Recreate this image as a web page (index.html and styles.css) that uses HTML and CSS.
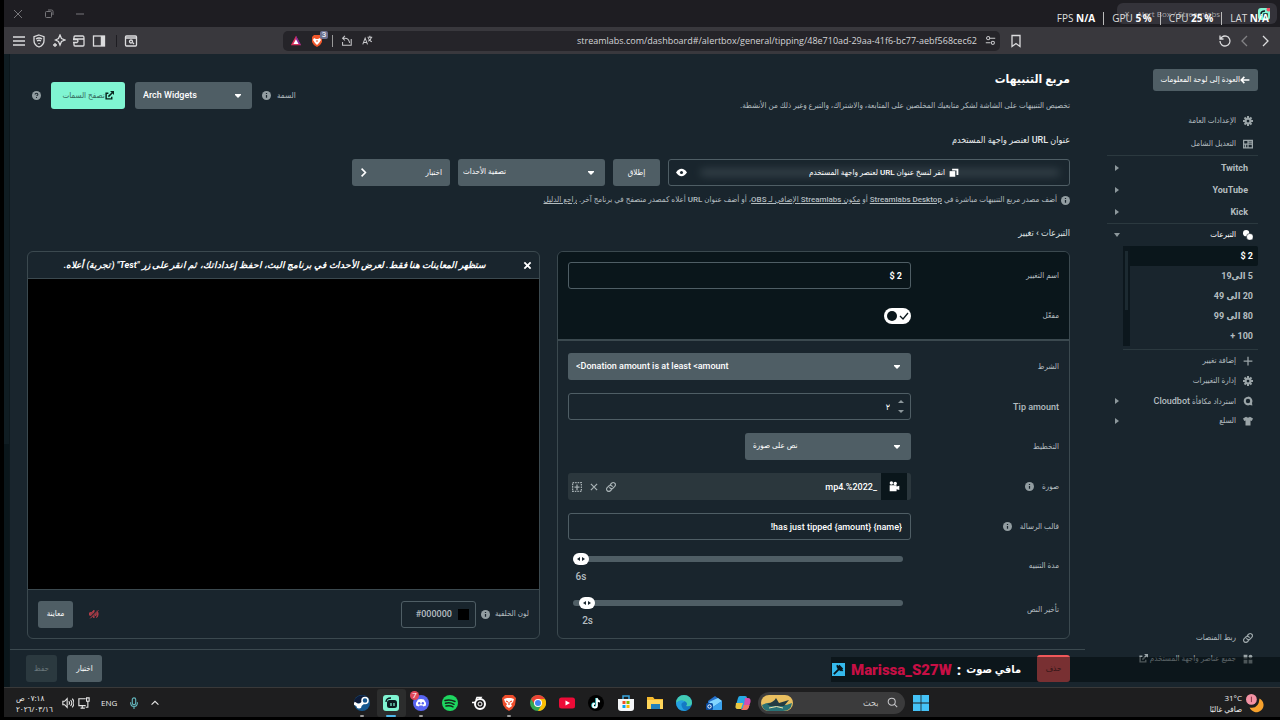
FILE: index.html
```html
<!DOCTYPE html>
<html lang="ar" dir="rtl">
<head>
<meta charset="utf-8">
<title>Alert Box / Streamlabs</title>
<link rel="stylesheet" href="styles.css">
</head>
<body>
<svg class="sprite" aria-hidden="true">
  <symbol id="i-info" viewBox="0 0 16 16"><circle cx="8" cy="8" r="8" fill="currentColor"/><path d="M8 7v5M8 3.5v2" stroke="#19252d" stroke-width="2.2"/></symbol>
  <symbol id="i-gear" viewBox="0 0 16 16"><path fill="none" stroke="currentColor" stroke-width="3.2" d="M8 0v16M0 8h16M2.4 2.4l11.2 11.2M13.600 2.4L2.400 13.600" /><circle cx="8" cy="8" r="5.600" fill="currentColor"/><circle cx="8" cy="8" r="2.200" fill="#19252d"/></symbol>
  <symbol id="i-link" viewBox="0 0 16 16"><g fill="none" stroke="currentColor" stroke-width="1.900" stroke-linecap="round"><path d="M7 4l2-2a3.500 3.500 0 0 1 5 5l-3 3a3.500 3.500 0 0 1-5-1"/><path d="M9 12l-2 2a3.500 3.500 0 0 1-5-5l3-3a3.500 3.500 0 0 1 5 1"/></g></symbol>
  <symbol id="i-ext" viewBox="0 0 16 16"><path fill="none" stroke="currentColor" stroke-width="2.600" d="M6 4H2v10h10v-4M6 10l7-7"/><path fill="currentColor" d="M9 0h7v7z"/></symbol>
</svg>

<header class="tabs" dir="ltr">
  <div class="window-controls">
    <button aria-label="إغلاق"><svg viewBox="0 0 10 10"><path d="M1 1l8 8M9 1L1 9"/></svg></button>
    <button aria-label="استعادة"><svg viewBox="0 0 10 10"><rect x="1.500" y="2.500" width="6" height="6" rx="1"/><path d="M4 1h3.500q1.500 0 1.500 1.500V6"/></svg></button>
    <button aria-label="تصغير"><svg viewBox="0 0 10 10"><path d="M1 5h8"/></svg></button>
  </div>
  <div class="tab"><span>✕</span><span class="tab-title">Alert Box / Streamlabs</span><svg viewBox="0 0 12 12"><rect width="12" height="12" rx="3" fill="#80f5d2"/><path d="M3 8V6q0-3 4-3M6 6h3v3H6z" fill="none" stroke="#0b1b20" stroke-width="1.500"/><circle cx="10.500" cy="1.500" r="2" fill="#f05064"/></svg></div>
</header>
<div class="perf" dir="ltr"><span>FPS <b>N/A</b></span><i></i><span>GPU <b>5&thinsp;%</b></span><i></i><span>CPU <b>25&thinsp;%</b></span><i></i><span>LAT <b>N/A</b></span></div>

<nav class="toolbar" dir="ltr">
  <div class="tools">
    <button aria-label="القائمة"><svg viewBox="0 0 14 14"><path d="M1 3h12M1 7h12M1 11h12"/></svg></button>
    <button aria-label="VPN"><svg viewBox="0 0 14 14"><path d="M7 1l5 1.700v4Q12 11 7 13 2 11 2 6.700v-4z"/><path d="M4 5q3-2 6 0M5 7q2-1.500 4 0M7 9v1"/></svg></button>
    <button aria-label="Leo"><svg viewBox="0 0 14 14"><path d="M8 1l1.500 3.500L13 6 9.500 7.500 8 11 6.500 7.500 3.500 6l3-1.500zM3 9v4M1 11h4"/></svg></button>
    <button aria-label="المحفظة"><svg viewBox="0 0 14 14"><path d="M2 5V3q0-1 1-1h8q1 0 1 2v7q0 1-1 1H3q-1 0-1-1V9M1 5h11M1 8.500h4q2-1.500 0-3H1"/></svg></button>
    <button aria-label="الشريط الجانبي"><svg viewBox="0 0 14 14"><rect x="1.500" y="2" width="11" height="10"/><path d="M10.500 2v10" stroke-width="3.500"/></svg></button>
    <span class="bar-sep"></span>
    <button aria-label="بحث في علامات التبويب"><svg viewBox="0 0 14 14"><rect x="1.500" y="2" width="11" height="10" rx="1"/><path d="M1.500 4h11M8.500 8.500L10 10"/><circle cx="7" cy="7.500" r="1.500"/></svg></button>
  </div>
  <div class="address">
    <svg viewBox="0 0 14 14"><path d="M7 1l6 11H1z" fill="#d8305b"/><path d="M7 1l6 11-6-3.500z" fill="#842b9c"/><path d="M7 5l3 5.500H4z" fill="#fff"/></svg>
    <span class="shield"><svg viewBox="0 0 14 14"><path d="M4 1h6l2 2v5q-1 3-5 5-4-2-5-5V3z" fill="#f0572b"/><path d="M4 4l2 1h2l2-1 1 2-2 3-2 2-2-2-2-3z" fill="#fff"/><path d="M6 7h2" stroke="#f0572b"/></svg><small>3</small></span>
    <span class="addr-sep"></span>
    <svg class="line" viewBox="0 0 14 14"><path d="M5 1L2 4l3 3M2 4h3q5 0 6 6M2 9v4h11V5"/></svg>
    <svg class="line translate" viewBox="0 0 14 14"><path d="M1 12l3-8 3 8M2 9.500h4M7 3h6M10 1v2M12 3q-1 4-4.500 5M8 4q1 3 4.500 4.500"/></svg>
    <input class="url" aria-label="شريط العنوان" value="streamlabs.com/dashboard#/alertbox/general/tipping/48e710ad-29aa-41f6-bc77-aebf568cec62">
    <svg class="line" viewBox="0 0 14 14"><path d="M6 4h7M1 10h6"/><circle cx="4" cy="4" r="2"/><circle cx="10" cy="10" r="2"/></svg>
  </div>
  <button aria-label="إشارة مرجعية"><svg viewBox="0 0 14 14"><path d="M3 1.500h8v11L7 9.500l-4 3z"/></svg></button>
  <div class="history">
    <button aria-label="تحديث"><svg viewBox="0 0 14 14"><path d="M2 7a5 5 0 1 0 2-4L2 5M2 1.500V5h3.500"/></svg></button>
    <button class="dim" aria-label="رجوع"><svg viewBox="0 0 14 14"><path d="M9 2L4 7l5 5"/></svg></button>
    <button aria-label="تقدم"><svg viewBox="0 0 14 14"><path d="M5 2l5 5-5 5"/></svg></button>
  </div>
</nav>

<div class="page">
  <aside class="sidebar">
    <button class="btn back"><svg viewBox="0 0 16 12"><path d="M15 6H2M7 1L2 6l5 5" fill="none" stroke="currentColor" stroke-width="2.500"/></svg>العودة إلى لوحة المعلومات</button>
    <ul class="menu">
      <li><svg><use href="#i-gear"/></svg><a href="#">الإعدادات العامة</a></li>
      <li><svg viewBox="0 0 16 16"><path d="M1 2h14v12H1zM8 2v12M1 8h14M8 5h7M4 8v6" fill="none" stroke="currentColor" stroke-width="2"/></svg><a href="#">التعديل الشامل</a></li>
    </ul>
    <ul class="menu platforms">
      <li><a href="#">Twitch</a><i class="caret"></i></li>
      <li><a href="#">YouTube</a><i class="caret"></i></li>
      <li><a href="#">Kick</a><i class="caret"></i></li>
    </ul>
    <ul class="menu open">
      <li class="on"><svg viewBox="0 0 16 16"><circle cx="5" cy="5" r="5" fill="currentColor"/><circle cx="11" cy="11" r="5.500" fill="currentColor" stroke="#19252d"/></svg><a href="#">التبرعات</a><i class="caret down"></i></li>
    </ul>
    <div class="variations">
      <ul>
        <li class="current"><a href="#">2 $</a></li>
        <li><a href="#">5 الى19</a></li>
        <li><a href="#">20 الى 49</a></li>
        <li><a href="#">80 الى 99</a></li>
        <li><a href="#">100 +</a></li>
      </ul>
      <span class="track"></span>
    </div>
    <ul class="menu compact">
      <li><svg viewBox="0 0 16 16"><path d="M8 1v14M1 8h14" stroke="currentColor" stroke-width="2"/></svg><a href="#">إضافة تغيير</a></li>
      <li><svg><use href="#i-gear"/></svg><a href="#">إدارة التغييرات</a></li>
      <li><svg viewBox="0 0 16 16"><path d="M8 1a7 7 0 1 0 3 13.400l4 .6-.6-4A7 7 0 0 0 8 1zm0 3.500a3.500 3.500 0 1 1 0 7 3.500 3.500 0 0 1 0-7z" fill="currentColor" fill-rule="evenodd"/></svg><a href="#">استرداد مكافأة <span class="latin">Cloudbot</span></a><i class="caret"></i></li>
      <li><svg viewBox="0 0 16 16"><path d="M5 1q3 3 6 0l5 3-2 4-2-1v8H4V7L2 8 0 4z" fill="currentColor"/></svg><a href="#">السلع</a><i class="caret"></i></li>
    </ul>
    <ul class="menu compact bottom">
      <li><svg><use href="#i-link"/></svg><a href="#">ربط المنصات</a></li>
      <li><svg viewBox="0 0 16 16"><path d="M1 1h6v6H1zM9 9h6v6H9zM1 9h6v6H1z" fill="currentColor"/><circle cx="12" cy="4" r="3" fill="currentColor"/></svg><a href="#">جميع عناصر واجهة المستخدم</a><svg class="ext"><use href="#i-ext"/></svg></li>
    </ul>
  </aside>

  <main>
    <div class="content">
      <div class="head">
        <div><h1>مربع التنبيهات</h1><p class="lead">تخصيص التنبيهات على الشاشة لشكر متابعيك المخلصين على المتابعة، والاشتراك، والتبرع وغير ذلك من الأنشطة.</p></div>
        <div class="theme">
          <label for="theme">السمة</label><svg class="info"><use href="#i-info"/></svg>
          <select id="theme" class="select" dir="ltr"><option>Arch Widgets</option></select>
          <button class="btn mint"><svg><use href="#i-ext"/></svg>تصفح السمات</button>
          <svg class="info help" viewBox="0 0 16 16"><circle cx="8" cy="8" r="8" fill="currentColor"/><path d="M5.500 6q0-2 2.500-2t2.500 2q0 1-2.500 2.500M8 10.500v2" stroke="#19252d" stroke-width="1.800" fill="none"/></svg>
        </div>
      </div>
      <h2>عنوان URL لعنصر واجهة المستخدم</h2>
      <div class="url-row">
        <div class="url-box">
          <span class="secret" aria-hidden="true"></span>
          <button class="copy"><svg viewBox="0 0 16 16"><path d="M5 1h10v10h-3V4H5z" fill="currentColor"/><path d="M1 5h9v9H1z" fill="currentColor"/></svg>انقر لنسخ عنوان URL لعنصر واجهة المستخدم</button>
          <button class="eye" aria-label="إظهار"><svg viewBox="0 0 18 14"><path d="M0 7q4-6 9-6t9 6q-4 6-9 6T0 7z" fill="currentColor"/><circle cx="9" cy="7" r="2.500" fill="#19252d"/></svg></button>
        </div>
        <button class="btn launch">إطلاق</button>
        <select class="select filter" dir="ltr" aria-label="تصفية الأحداث"><option>تصفية الأحداث</option></select>
        <button class="btn test">اختبار<svg viewBox="0 0 10 14"><path d="M2 1l6 6-6 6" fill="none" stroke="currentColor" stroke-width="2.500"/></svg></button>
      </div>
      <p class="note"><svg class="info"><use href="#i-info"/></svg><span>أضف مصدر مربع التنبيهات مباشرة في <a href="#">Streamlabs Desktop</a> أو <a href="#">مكون Streamlabs الإضافي لـ OBS</a>، أو أضف عنوان URL أعلاه كمصدر متصفح في برنامج آخر. <a href="#">راجع الدليل</a></span></p>
      <p class="crumbs">التبرعات <span dir="ltr">‹</span> تغيير</p>

      <div class="panels">
        <section class="panel">
          <div class="group dark">
            <div class="row"><label for="name">اسم التغيير</label><input id="name" class="field strong" dir="ltr" value="$ 2"></div>
            <div class="row"><label for="enabled">مفعّل</label><input id="enabled" class="switch" type="checkbox" checked></div>
          </div>
          <div class="group">
            <div class="row"><label for="cond">الشرط</label><select id="cond" class="select" dir="ltr"><option>&lt;Donation amount is at least &lt;amount</option></select></div>
            <div class="row"><label for="tip" class="latin">Tip amount</label><span class="number"><input id="tip" class="field" value="٢"><i class="up"></i><i class="dn"></i></span></div>
            <div class="row"><label for="layout">التخطيط</label><select id="layout" class="select short" dir="ltr"><option>نص على صورة</option></select></div>
            <div class="row"><span class="label">صورة<svg class="info"><use href="#i-info"/></svg></span>
              <div class="media">
                <span class="thumb"><svg viewBox="0 0 16 16"><circle cx="3.500" cy="3" r="2.500" fill="#fff"/><circle cx="9" cy="3.500" r="2.500" fill="#fff"/><path d="M1 6h10v2l4-1v6l-4-1v3H1z" fill="#fff"/></svg></span>
                <span class="file" dir="ltr">mp4.%2022_</span>
                <button aria-label="رابط"><svg><use href="#i-link"/></svg></button>
                <button aria-label="إزالة"><svg viewBox="0 0 16 16"><path d="M3 3l10 10M13 3L3 13" stroke="currentColor" stroke-width="2"/></svg></button>
                <button aria-label="المعرض"><svg viewBox="0 0 16 16"><rect x="1" y="1" width="14" height="14" fill="none" stroke="currentColor" stroke-width="2" stroke-dasharray="2.500 1.500"/><path d="M8 4v9M4 8h8" stroke="currentColor" stroke-width="2"/></svg></button>
              </div></div>
            <div class="row"><span class="label"><label for="msg">قالب الرسالة</label><svg class="info"><use href="#i-info"/></svg></span><input id="msg" class="field" dir="ltr" value="!has just tipped {amount} {name}"></div>
            <div class="row slider-row"><label for="dur">مدة التنبيه</label><div class="slide" dir="ltr"><input id="dur" type="range" min="6" max="300" value="6"><output for="dur" style="margin-left:0%">6s</output></div></div>
            <div class="row slider-row"><label for="delay">تأخير النص</label><div class="slide" dir="ltr"><input id="delay" type="range" min="0" max="100" value="2"><output for="delay" style="margin-left:2%">2s</output></div></div>
          </div>
        </section>

        <section class="panel preview">
          <div class="preview-head"><button aria-label="إغلاق"><svg viewBox="0 0 10 10"><path d="M1.500 1.500l7 7M8.500 1.500l-7 7" stroke="#fff" stroke-width="2"/></svg></button><p>ستظهر المعاينات هنا فقط. لعرض الأحداث في برنامج البث، احفظ إعداداتك، ثم انقر على زر "Test" (تجربة) أعلاه.</p></div>
          <div class="stage"></div>
          <div class="preview-foot">
            <label for="bg">لون الخلفية</label><svg class="info"><use href="#i-info"/></svg>
            <span class="color"><i></i><input id="bg" dir="ltr" value="#000000"></span>
            <button class="mute" aria-label="كتم"><svg viewBox="0 0 16 16"><path d="M1 6h3l4-4v12l-4-4H1zM10 5q3 3 0 6M12 2q5 6 0 12" fill="#c8414d" stroke="#c8414d" stroke-width="1.500" fill-opacity=".7"/><path d="M1 15L15 1" stroke="#19252d" stroke-width="3"/><path d="M2 15L15 2" stroke="#c8414d" stroke-width="1.500"/></svg></button>
            <button class="btn">معاينة</button>
          </div>
        </section>
      </div>
    </div>
    <footer class="actions"><button class="btn danger">حذف</button><span class="grow"></span><button class="btn try">اختبار</button><button class="btn" disabled>حفظ</button></footer>
  </main>
  <span class="edge"></span>
  <div class="chat" dir="ltr"><svg viewBox="0 0 14 14"><rect width="14" height="14" fill="#35b9ec"/><path d="M2 12l6-6M5 2.500l6.500 6" stroke="#07141a" stroke-width="2"/><path d="M5 5l3-3 4 4-3 3z" fill="#07141a"/></svg><b class="user">Marissa_S27W</b><b>:</b><b dir="rtl">مافي صوت</b></div>
</div>

<footer class="taskbar" dir="ltr">
  <div class="tray">
    <div class="clock" dir="rtl"><span>٠٧:١٨ ص</span><span dir="ltr">٢٠٢٦/٠٣/١٦</span></div>
    <svg class="line vol" viewBox="0 0 14 14"><path d="M1 5h2l3-3v10L3 9H1zM8 5q1.500 2 0 4M10 3.500q3 3.500 0 7M12 2q4 5 0 10"/></svg>
    <svg class="line" viewBox="0 0 14 14"><path d="M9 2H1v8h8M3 13h5M5 10v3M10 1h3v4h-3zM11.500 5v7H9"/></svg>
    <span class="lang">ENG</span>
    <svg class="line mic" viewBox="0 0 14 14"><rect x="5" y="1" width="4" height="8" rx="2"/><path d="M3 6q0 5 4 5t4-5M7 11v3"/></svg>
    <svg class="line chev" viewBox="0 0 14 14"><path d="M3 9l4-4 4 4"/></svg>
  </div>
  <div class="dock">
    <div class="apps">
      <button class="run" aria-label="Steam"><svg viewBox="0 0 16 16"><circle cx="8" cy="8" r="8" fill="#16578f"/><path d="M0 8a8 8 0 0 1 14-5L8 8z" fill="#0d1b38"/><path d="M0 8l5 3 5-4" fill="none" stroke="#fff" stroke-width="3"/><circle cx="11" cy="5.500" r="3" fill="#16578f" stroke="#fff" stroke-width="1.500"/><circle cx="5" cy="11" r="2.500" fill="#fff"/></svg></button>
      <button class="run active" aria-label="Streamlabs"><svg viewBox="0 0 16 16"><rect width="16" height="16" rx="3" fill="#80f5d2"/><path d="M3 7q0-4 5-4" fill="none" stroke="#0b1b20" stroke-width="1.300"/><rect x="4" y="5" width="10" height="8" rx="2.500" fill="#0b1b20"/><path d="M8 8v3M11 8v3" stroke="#80f5d2" stroke-width="1.200"/></svg></button>
      <button class="run" aria-label="Discord"><svg viewBox="0 0 16 16"><circle cx="8" cy="8" r="8" fill="#5865f2"/><path d="M5 4.500q3-1 6 0 2.500 3 2 6l-2.500 1-1-1h-3l-1 1-2.500-1q-.5-3 2-6z" fill="#fff"/><circle cx="6.200" cy="8.200" r="1.200" fill="#5865f2"/><circle cx="9.800" cy="8.200" r="1.200" fill="#5865f2"/></svg><small>7</small></button>
      <button aria-label="Spotify"><svg viewBox="0 0 16 16"><circle cx="8" cy="8" r="8" fill="#1ed760"/><path d="M3 5.500q5-1.500 10 1M3.500 8.300q4.500-1.300 8.500 1M4 11q4-1 7 .8" fill="none" stroke="#14251a" stroke-width="1.500" stroke-linecap="round"/></svg></button>
      <button aria-label="SteelSeries"><svg viewBox="0 0 16 16"><circle cx="9" cy="9" r="5" fill="none" stroke="#fff" stroke-width="2"/><circle cx="9" cy="9" r="2" fill="none" stroke="#fff"/><path d="M1 7.500h4M5 5l1-2.500h4L9 4" stroke="#fff" fill="none" stroke-width="1.500"/></svg></button>
      <button class="run" aria-label="Brave"><svg viewBox="0 0 16 16"><path d="M4 0h8l3 3-1 7q-2 4-6 6-4-2-6-6L1 3z" fill="#ee4d2b"/><path d="M3 4l3-1h4l3 1-1 3-2 2 1 2-3 2-3-2 1-2-2-2z" fill="#fff"/><path d="M5 6l2 1M11 6L9 7M8 7v3" stroke="#ee4d2b" stroke-width="1.200"/></svg></button>
      <button aria-label="Chrome"><svg viewBox="0 0 16 16"><circle cx="8" cy="8" r="8" fill="#34a853"/><path d="M1.100 4A8 8 0 0 1 15 4H8L5 10z" fill="#ea4335"/><path d="M15 4A8 8 0 0 1 8 16l3.500-6L8 4z" fill="#fbbc04"/><circle cx="8" cy="8" r="4" fill="#fff"/><circle cx="8" cy="8" r="3" fill="#4285f4"/></svg></button>
      <button aria-label="YouTube"><svg viewBox="0 0 16 16"><rect y="2.500" width="16" height="11" rx="2.500" fill="#ed0b37"/><path d="M6.500 5.500L11 8l-4.500 2.500z" fill="#fff"/></svg></button>
      <button aria-label="TikTok"><svg viewBox="0 0 16 16"><circle cx="8" cy="8" r="8" fill="#000"/><path d="M8.300 3v7.300a2 2 0 1 1-2-2M8.300 3q.5 3 3.200 3.300" fill="none" stroke="#46dfe5" stroke-width="2"/><path d="M9 3.300v7.300a2 2 0 1 1-2-2M9 3.300q.5 3 3 3.300" fill="none" stroke="#fff" stroke-width="1.700"/></svg></button>
      <button aria-label="Microsoft Store"><svg viewBox="0 0 16 16"><path d="M5 4V1h6v3" fill="none" stroke="#38a5e0" stroke-width="1.500"/><path d="M0 4h16v9q0 3-3 3H3q-3 0-3-3z" fill="#f4f6f8"/><path d="M4.500 6h3v3h-3z" fill="#f25022"/><path d="M8.500 6h3v3h-3z" fill="#7fba00"/><path d="M4.500 10h3v3h-3z" fill="#00a4ef"/><path d="M8.500 10h3v3h-3z" fill="#ffb900"/></svg></button>
      <button aria-label="مستكشف الملفات"><svg viewBox="0 0 16 16"><path d="M0 2h6l1.500 2H16v10H0z" fill="#f5b92e"/><path d="M0 5h16v9H0z" fill="#ffd65a"/><path d="M4 9h9v5H4z" fill="#2382bd"/></svg></button>
      <button aria-label="Edge"><svg viewBox="0 0 16 16"><circle cx="8" cy="8" r="8" fill="#1479c4"/><path d="M0 8a8 8 0 0 1 16 0q-.5 4-6 3 2-2 0-4-4-3-10 1z" fill="#42cbb4"/><path d="M0 8q5-5 9-1-5 0-3 5 1 3 5 3.500Q1 17 0 8z" fill="#25a0df"/></svg></button>
      <button aria-label="Outlook"><svg viewBox="0 0 16 16"><path d="M2 6l7-5 7 5v8q0 1-2 1H4q-2 0-2-2z" fill="#2470cc"/><path d="M3 7l9-4 4 3-9 6z" fill="#82d6ff"/><path d="M7 12l9-6v8q0 1-1 1H6z" fill="#3aa2ee"/><rect y="8" width="7" height="7" rx="1.500" fill="#0b4da2"/><circle cx="3.500" cy="11.500" r="1.700" fill="none" stroke="#fff"/></svg></button>
      <button aria-label="Copilot"><svg viewBox="0 0 16 16"><path d="M5 1h5q2 0 2 2l-3 9q-1 2-3 2H3q-3 0-2-4l2-7q.5-2 2-2z" fill="#27a9e6"/><path d="M1 8l-.5 4q0 2 3 2H6l2-6z" fill="#eac640"/><path d="M10 3h3q3 0 2.500 4l-2 6q-1 2-3 2H6q2-1 2.500-3z" fill="#d54eb2"/><path d="M8.500 10h6l-1 3q-1 2-3 2H6q2-1 2.500-5z" fill="#f17662"/></svg></button>
    </div>
    <label class="search"><svg class="art" viewBox="0 0 32 16"><rect width="32" height="16" rx="8" fill="#e9bf60"/><path d="M1 10q7-4 14-1t16-1q-1 8-9 8H9Q2 16 1 10z" fill="#297276"/><path d="M6 9q7-2 9-6l3 5 10-3-5 6H9z" fill="#243c43"/><path d="M8 13q8-3 14 0" stroke="#f1e2ae" fill="none"/></svg><input dir="rtl" placeholder="بحث"><svg class="line" viewBox="0 0 14 14"><circle cx="6" cy="6" r="4.500"/><path d="M9.500 9.500L13 13"/></svg></label>
    <button class="start" aria-label="ابدأ"><svg viewBox="0 0 16 16"><path d="M0 0h7.600v7.600H0zM8.400 0H16v7.600H8.400zM0 8.400h7.600V16H0zM8.400 8.400H16V16H8.400z" fill="#45c3f7"/></svg></button>
  </div>
  <div class="weather"><div><b>31°C</b><span dir="rtl">صافي غالبًا</span></div><svg viewBox="0 0 20 20"><path d="M15 5a8 8 0 1 1-11 10q10 2 11-10z" fill="#f6a12d"/><circle cx="6" cy="6" r="6" fill="#f492a4"/><path d="M6 3v6" stroke="#7b2c3c"/></svg></div>
</footer>
</body>
</html>
```
FILE: styles.css
```css
:root {
  --bg: #19252d;
  --dark: #0a161b;
  --btn: #4f5e65;
  --line: #3b494f;
  --text: #b4bdc0;
  --ui: Roboto, "DejaVu Sans Condensed", "DejaVu Sans", sans-serif;
  --chrome: "Open Sans", "DejaVu Sans Condensed", "DejaVu Sans", sans-serif;
}
* { box-sizing: border-box; margin: 0; padding: 0; }
body {
  height: 100vh;
  display: flex;
  flex-direction: column;
  padding-left: 4px;
  padding-bottom: 3px;
  background: #000;
  color: var(--text);
  font: 500 8px/16px var(--ui);
  overflow: hidden;
}
button, input, select { font: inherit; color: inherit; background: none; border: 0; outline: 0; }
button { display: flex; align-items: center; justify-content: center; white-space: nowrap; }
a { color: inherit; text-decoration: none; }
ul { list-style: none; }
svg { flex: none; display: block; }
.sprite { position: absolute; width: 0; height: 0; }
.line { fill: none; stroke: #c9c9cc; stroke-width: 1.3; }
.latin { font-size: 9px; }

/* browser frame */
.tabs { flex: none; height: 27px; background: #1e1d22; display: flex; justify-content: space-between; padding: 3px 3px 3px 9px; font-family: var(--chrome); }
.window-controls { display: flex; gap: 21px; align-items: center; }
.window-controls svg { width: 10px; height: 10px; fill: none; stroke: #77767a; }
.tab { width: 160px; background: #34333a; border-radius: 6px; display: flex; align-items: center; gap: 7px; padding: 0 7px; color: #a3a3a7; }
.tab-title { flex: 1; white-space: nowrap; }
.tab svg { width: 12px; height: 12px; }
.perf { position: absolute; top: 10px; right: 11px; display: flex; align-items: center; gap: 8px; font: 10px/17px var(--chrome); color: #ddd; white-space: nowrap; }
.perf b { color: #fff; }
.perf i { width: 1px; height: 13px; background: #bbb; }
.toolbar { flex: none; height: 27px; background: #39383d; display: flex; align-items: center; padding: 0 8px; }
.toolbar button svg { width: 14px; height: 14px; fill: none; stroke: #dcdcde; stroke-width: 1.3; }
.toolbar .dim { opacity: .45; }
.tools { display: flex; align-items: center; gap: 6px; width: 271px; }
.bar-sep { width: 1px; height: 12px; background: #1e1d22; margin: 0 1px 0 4px; }
.address { flex: 0 1 717px; height: 20px; border-radius: 5px; background: #252429; display: flex; align-items: center; gap: 8px; padding: 0 4px 0 7px; margin-right: 9px; }
.address svg { width: 12px; height: 12px; }
.shield { position: relative; }
.address .shield svg { width: 14px; height: 14px; }
.shield small { position: absolute; top: -3px; right: -4px; width: 8px; height: 8px; border-radius: 2px; background: #6b6f8f; color: #fff; font: 8px/8px var(--ui); text-align: center; }
.addr-sep { width: 1px; height: 12px; background: #999; }
.address .line { width: 11px; height: 11px; }
.translate { margin-left: 2px; }
.url { flex: 1; min-width: 0; text-align: right; font: 9px/16px var(--chrome); color: #d4d4d7; }
.history { margin-left: auto; display: flex; gap: 6px; }

/* page */
.page { position: relative; flex: 1; min-height: 0; display: flex; background: var(--bg); }
.edge { flex: none; width: 6px; background: linear-gradient(#101d23 0 390px, #0a161b 390px); border-right: 1px solid #0c171c; }
.btn { height: 27px; padding: 0 8px; border-radius: 3px; background: var(--btn); color: #fff; }
.btn:disabled { background: #2b393f; color: #69767b; }
.select { appearance: none; height: 27px; width: 100%; padding: 0 24px 2px 8px; border-radius: 3px; color: #fff; font-size: 9px;
  background: var(--btn) url("data:image/svg+xml,%3Csvg xmlns='http://www.w3.org/2000/svg' width='6' height='4'%3E%3Cpath d='M0 0h6v1L3 4 0 1z' fill='white'/%3E%3C/svg%3E") no-repeat right 11px center; }
.info { width: 9px; height: 9px; color: #929da1; }

.sidebar { flex: none; width: 195px; display: flex; flex-direction: column; padding: 15px 22px 18px 0; }
.back { align-self: flex-start; height: 22px; padding: 0 8px; }
.back svg { width: 10px; height: 8px; }
.menu { width: 151px; align-self: flex-start; padding: 0 5px; border-bottom: 1px solid #2b393f; }
.menu li { height: 23px; display: flex; align-items: center; gap: 7px; white-space: nowrap; }
.menu svg { width: 10px; height: 10px; color: #9ba5a8; }
.back + .menu { padding-top: 18px; }
.menu.platforms { padding-top: 1px; }
.platforms li, .variations li { font-size: 9px; font-weight: 700; }
.menu.platforms li { height: 22px; padding-right: 5px; }
.caret { margin-right: auto; border: 3px solid transparent; border-left: 4px solid #8d989c; border-right: 0; margin-left: 3px; }
.caret.down { border: 3px solid transparent; border-top: 4px solid #8d989c; border-bottom: 0; margin-left: 2px; }
.menu.open { border: 0; }
.menu.open li { height: 22px; }
.menu .on, .menu .on svg { color: #fff; }
.variations { width: 135px; display: flex; border-bottom: 1px solid #2b393f; padding-bottom: 3px; }
.variations ul { flex: 1; }
.variations li { height: 20px; line-height: 20px; padding-right: 5px; }
.current { background: var(--dark); color: #fff; border-radius: 0 2px 2px 0; }
.track { width: 7px; border: 2px solid #0c171d; border-width: 5px 2px 36px; background: #1c2a31; }
.menu.compact { border: 0; margin-top: 1px; }
.menu.compact li { height: 20px; }
.menu.bottom { margin-top: auto; }
.menu.bottom li { height: 21px; }
.menu .ext { width: 9px; height: 9px; margin-right: -5px; }

main { flex: 1; min-width: 0; display: flex; flex-direction: column; }
.content { flex: 1; display: flex; flex-direction: column; padding: 15px 15px 10px 17px; }
.head { display: flex; justify-content: space-between; }
h1 { font: 700 12px/20px var(--ui); color: #fff; }
.lead { margin-top: 9px; }
.theme { display: flex; align-items: center; gap: 6px; padding-top: 13px; height: 40px; }
.theme .select { width: 117px; margin: 0 4px; }
.theme .btn { width: 74px; background: #80f5d2; color: #35685c; padding: 0 6px; }
.theme .btn svg { width: 9px; height: 9px; color: #09241d; }
.help { margin: 0 4px 0 5px; }
h2 { margin-top: 18px; font: 500 9px/16px var(--ui); color: #e6eaeb; }
.url-row { display: flex; gap: 8px; margin-top: 11px; }
.url-box { position: relative; flex: 0 1 402px; height: 27px; border: 1px solid var(--btn); border-radius: 3px; display: flex; align-items: center; justify-content: space-between; padding: 0 110px 0 7px; color: #fff; }
.secret { position: absolute; inset: 10px 10px 10px 32px; background: #536067; filter: blur(4px); opacity: .7; }
.copy, .eye { position: relative; }
.copy { gap: 4px; }
.copy svg { width: 10px; height: 10px; }
.eye svg { width: 11px; height: 9px; }
.launch { width: 47px; }
.filter { width: 147px; padding-left: 5px; font-size: 8px; }
.test { width: 98px; justify-content: space-between; }
.test svg { width: 7px; height: 9px; }
.note { margin-top: 6px; display: flex; align-items: center; gap: 4px; white-space: nowrap; }
.note a { text-decoration: underline; }
.crumbs { margin-top: 17px; font-size: 9px; color: #dde2e3; }
.panels { flex: 1; margin-top: 10px; display: grid; grid-template-columns: 1fr 1fr; gap: 17px; }
.panel { min-width: 0; border: 1px solid var(--line); border-radius: 6px; overflow: hidden; }
.group { display: grid; gap: 13px; padding: 12px 10px 10px; }
.dark { background: var(--dark); border-bottom: 2px solid var(--line); padding-top: 10px; }
.row { display: grid; grid-template-columns: 148px 1fr; align-items: center; min-height: 27px; }
.label { display: flex; align-items: center; gap: 8px; }
.field { width: 100%; height: 27px; border: 1px solid var(--btn); border-radius: 3px; padding: 0 8px; color: #fff; text-align: right; font-size: 9px; }
.strong { font-weight: 700; }
.switch { appearance: none; width: 27px; height: 16px; border-radius: 8px; background: #fff url("data:image/svg+xml,%3Csvg xmlns='http://www.w3.org/2000/svg' width='27' height='16'%3E%3Ccircle cx='8' cy='8' r='5' fill='%230a161b'/%3E%3Cpath d='M16 8l3 3 5-6' fill='none' stroke='%230a161b' stroke-width='1.300'/%3E%3C/svg%3E"); }
.number { position: relative; }
.number .field { padding-right: 20px; display: block; }
.number i { position: absolute; right: 7px; border: 3px solid transparent; }
.number .up { top: 7px; border-top: 0; border-bottom-color: #8d989c; }
.number .dn { bottom: 7px; border-bottom: 0; border-top-color: #8d989c; }
.short { width: 166px; font-size: 8px; }
.media { height: 27px; background: #2b373d; border-radius: 3px; display: flex; align-items: center; gap: 7px; padding: 0 4px; color: #a4aeb1; }
.media button svg { width: 10px; height: 10px; }
.thumb { width: 26px; height: 27px; background: var(--dark); display: flex; align-items: center; justify-content: center; }
.thumb svg { width: 11px; height: 11px; }
.file { flex: 1; text-align: right; color: #fff; font-size: 9px; margin-right: -3px; }
.slider-row label { padding-bottom: 6px; }
.slide { height: 31px; padding: 0 8px 0 5px; }
.slide input { appearance: none; display: block; width: 100%; height: 12px; }
.slide input::-webkit-slider-runnable-track { height: 6px; border-radius: 3px; background: var(--btn); }
.slide input::-webkit-slider-thumb { appearance: none; width: 16px; height: 12px; margin-top: -3px; border-radius: 6px; background: #fff url("data:image/svg+xml,%3Csvg xmlns='http://www.w3.org/2000/svg' width='16' height='12'%3E%3Cpath d='M7 4v4L4 6zM9 4v4l3-2z' fill='%2319252d'/%3E%3C/svg%3E"); }
.slide output { display: block; width: 16px; padding-top: 5px; font-size: 10px; line-height: 14px; text-align: center; }
.preview { display: flex; flex-direction: column; }
.preview-head { height: 27px; border-bottom: 1px solid var(--line); display: flex; align-items: center; justify-content: space-between; padding: 0 7px; }
.preview-head svg { width: 9px; height: 9px; }
.preview-head p { flex: 1; text-align: center; padding-right: 8px; font: italic 700 9px/16px var(--ui); color: #fff; white-space: nowrap; }
.stage { flex: 1; background: #000; }
.preview-foot { height: 49px; border-top: 1px solid var(--line); display: flex; align-items: center; gap: 5px; padding: 0 10px; }
.preview-foot .btn { min-width: 35px; padding: 0 6px; }
.color { width: 75px; height: 27px; border: 1px solid var(--btn); border-radius: 3px; display: flex; align-items: center; gap: 6px; padding: 0 6px; font-size: 9px; }
.color i { width: 11px; height: 11px; background: #000; }
.color input { width: 44px; text-align: right; }
.mute { margin-right: auto; margin-left: 11px; }
.mute svg { width: 10px; height: 10px; }
.actions { flex: none; height: 39px; border-top: 1px solid var(--line); display: flex; gap: 10px; padding: 5px 15px 0 16px; }
.actions .btn { min-width: 31px; padding: 0 6px; }
.actions .danger { min-width: 33px; background: #f0585a; color: #601f22; }
.actions .try { min-width: 35px; }
.grow { flex: 1; }
.chat { position: absolute; right: 0; bottom: 5px; width: 449px; height: 25px; display: flex; align-items: center; gap: 5px; background: rgba(0, 8, 10, .5); font: 700 15px/24px var(--ui); color: #fff; }
.chat svg { width: 13px; height: 13px; margin: 0 1px; }
.chat b[dir] { font-size: 11px; }
.chat .user { color: #c70f45; }

/* taskbar */
.taskbar { flex: none; height: 30px; border-top: 1px solid #393939; background: #1e1e1f; display: flex; align-items: center; padding: 0 16px 0 8px; font: 9px/11px var(--chrome); color: #eee; }
.tray, .weather { flex: 1; display: flex; align-items: center; }
.tray { gap: 4px; }
.clock { width: 38px; margin-left: 4px; display: flex; flex-direction: column; align-items: flex-end; white-space: nowrap; font-size: 8px; }
.tray .line { width: 12px; height: 12px; stroke: #e6e6e6; }
.tray .vol { margin-left: 4px; }
.lang { margin: 0 7px; font-size: 8px; }
.tray .mic { stroke: #65b8bf; margin-right: 5px; }
.dock { display: flex; align-items: center; }
.apps { width: 410px; display: flex; }
.apps button { position: relative; flex: 1; height: 28px; border-radius: 3px; }
.apps svg, .start svg { width: 16px; height: 16px; }
.run::after { content: ""; position: absolute; bottom: 0; width: 4px; height: 2px; border-radius: 1px; background: #999; }
.active { background: #2c2d2d; }
.active::after { width: 10px; background: #4fb8ec; }
.apps small { position: absolute; top: 2px; left: 4px; width: 9px; height: 9px; border-radius: 5px; background: #e0485a; color: #fff; font: 8px/9px var(--ui); }
.search { width: 147px; height: 22px; border-radius: 11px; background: #3b3b3c; display: flex; align-items: center; gap: 8px; padding: 0 7px 0 3px; }
.search input { flex: 1; min-width: 0; }
.search input::placeholder { color: #ccc; }
.search .art { width: 32px; height: 16px; }
.search .line { width: 11px; height: 11px; }
.start { margin-left: 8px; }
.weather { justify-content: flex-end; gap: 4px; }
.weather div { display: flex; flex-direction: column; align-items: flex-end; white-space: nowrap; font-size: 8px; }
.weather b { font-weight: 400; }
.weather svg { width: 18px; height: 20px; }
```
